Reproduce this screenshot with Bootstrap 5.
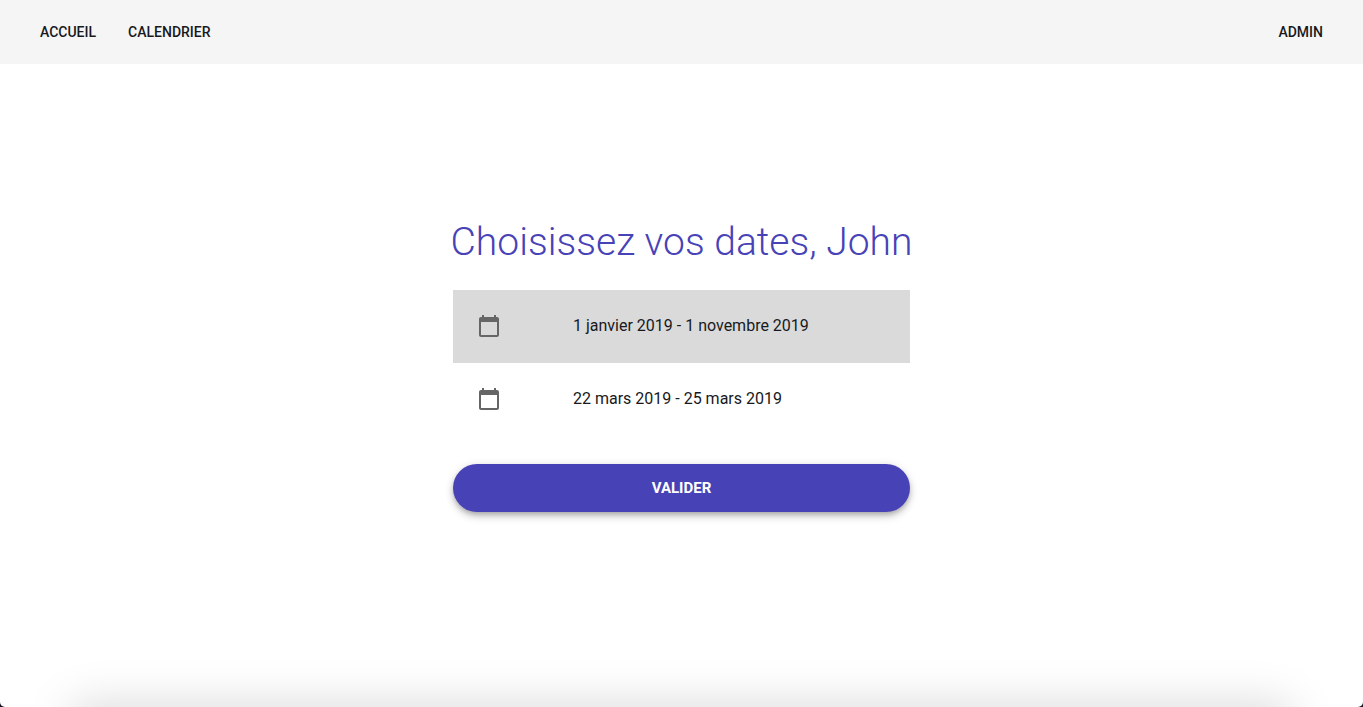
<!DOCTYPE html>
<html lang="fr">
<head>
<meta charset="utf-8">
<meta name="viewport" content="width=device-width, initial-scale=1">
<title>Choisissez vos dates</title>
<link href="https://cdn.jsdelivr.net/npm/bootstrap@5.3.0/dist/css/bootstrap.min.css" rel="stylesheet">
<style>
  :root { --brand: #4842b7; --ink: #18191d; }
  html { background: #15131f; }
  body { font-family: Roboto, sans-serif; color: var(--ink); background: #fff; border-radius: 0 0 5px 5px; overflow: hidden; }
  .topbar { background: #f5f5f5; min-height: 64px; }
  .topbar .navbar-nav .nav-link { color: var(--ink); font-size: 14px; line-height: 24px; font-weight: 500; padding: 8px 16px; }
  .stage { padding-bottom: 42px; }
  .picker { width: 457px; max-width: 100%; }
  .picker-title { color: var(--brand); font-size: 39px; line-height: 48px; font-weight: 300; white-space: nowrap; }
  .date-row { gap: 72px; height: 73px; padding: 0 24px; border: 0; color: var(--ink); font-size: 16px; line-height: 24px; }
  .list-group-flush > .date-row { border-bottom: 1px solid transparent; }
  .date-row.active { background: #dadada; color: var(--ink); margin-top: 0; }
  .list-group-flush > .date-row.active { border-bottom-color: #dadada; }
  .date-row svg { fill: #666; flex: none; }
  .btn-validate { height: 48px; background: var(--brand); color: #fff; font-size: 15px; line-height: 24px; font-weight: 700; border: 0;
    box-shadow: 0 3px 5px -1px rgba(0,0,0,.2), 0 5px 8px 0 rgba(0,0,0,.14), 0 1px 10px 0 rgba(0,0,0,.1); }
  .btn-validate:hover { background: #3d38a0; color: #fff; }
  .bottom-sheet { flex: none; margin: 0 96px; height: 0; box-shadow: 0 24px 48px 24px rgba(0,0,0,.17); }
</style>
</head>
<body class="d-flex flex-column vh-100">
  <nav class="topbar navbar navbar-expand px-4 py-0" aria-label="Navigation principale">
    <div class="navbar-nav w-100">
      <a class="nav-link" href="#accueil">ACCUEIL</a>
      <a class="nav-link" href="#calendrier">CALENDRIER</a>
      <a class="nav-link ms-auto" href="#admin">ADMIN</a>
    </div>
  </nav>
  <main class="stage flex-grow-1 d-flex align-items-center justify-content-center">
    <form class="picker">
      <h1 class="picker-title d-flex justify-content-center mb-4">Choisissez vos dates, John</h1>
      <div class="list-group list-group-flush mb-4 pb-1">
        <button type="button" class="date-row list-group-item list-group-item-action d-flex align-items-center active" aria-pressed="true">
          <svg width="24" height="24" viewBox="0 0 24 24" aria-hidden="true"><path d="M20 3h-1V1h-2v2H7V1H5v2H4c-1.100 0-2 .9-2 2v16c0 1.100.9 2 2 2h16c1.100 0 2-.9 2-2V5c0-1.100-.9-2-2-2zm0 18H4V8h16v13z"/></svg>
          <span>1 janvier 2019 - 1 novembre 2019</span>
        </button>
        <button type="button" class="date-row list-group-item list-group-item-action d-flex align-items-center" aria-pressed="false">
          <svg width="24" height="24" viewBox="0 0 24 24" aria-hidden="true"><path d="M20 3h-1V1h-2v2H7V1H5v2H4c-1.100 0-2 .9-2 2v16c0 1.100.9 2 2 2h16c1.100 0 2-.9 2-2V5c0-1.100-.9-2-2-2zm0 18H4V8h16v13z"/></svg>
          <span>22 mars 2019 - 25 mars 2019</span>
        </button>
      </div>
      <button type="submit" class="btn btn-validate rounded-pill w-100">VALIDER</button>
    </form>
  </main>
  <div class="bottom-sheet"></div>
  <script src="https://cdn.jsdelivr.net/npm/bootstrap@5.3.0/dist/js/bootstrap.bundle.min.js"></script>
</body>
</html>
